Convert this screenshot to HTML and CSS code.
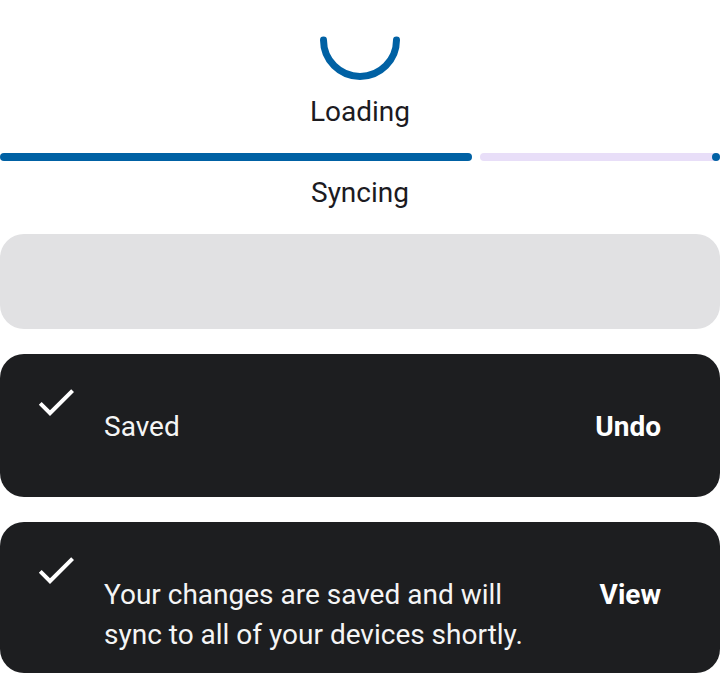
FILE: index.html
```html
<!DOCTYPE html>
<html lang="en">
<head>
    <meta charset="UTF-8">
    <meta name="viewport" content="width=device-width, initial-scale=1.0">
    <title>Status Components</title>
    <link rel="stylesheet" href="styles.css">
</head>
<body>
    <div class="status">
        <svg class="spinner" width="80" height="80" viewBox="0 0 80 80">
            <path d="M3.5 40 A36.5 36.5 0 0 0 76.5 40" fill="none" stroke="currentColor" stroke-width="7" stroke-linecap="round"/>
        </svg>
        <div class="label">Loading</div>
    </div>

    <div class="status sync">
        <div class="progress">
            <div class="progress-fill" style="width: 472px"></div>
            <div class="progress-track"><span class="stop-dot"></span></div>
        </div>
        <div class="label">Syncing</div>
    </div>

    <div class="skeleton"></div>

    <div class="snackbar">
        <svg class="snackbar-icon" width="48" height="48" viewBox="0 0 24 24">
            <path d="M9 16.17L4.83 12l-1.42 1.41L9 19 21 7l-1.41-1.41z" fill="currentColor"/>
        </svg>
        <div class="snackbar-message">Saved</div>
        <button class="snackbar-action">Undo</button>
    </div>

    <div class="snackbar">
        <svg class="snackbar-icon" width="48" height="48" viewBox="0 0 24 24">
            <path d="M9 16.17L4.83 12l-1.42 1.41L9 19 21 7l-1.41-1.41z" fill="currentColor"/>
        </svg>
        <div class="snackbar-message">Your changes are saved and will sync to all of your devices shortly.</div>
        <button class="snackbar-action">View</button>
    </div>
</body>
</html>
```

FILE: styles.css
```css
:root {
    --primary: #0061a4;
    --track: #e8def8;
    --on-surface: #1c1b1f;
    --skeleton: #e1e1e3;
    --inverse-surface: #1d1e20;
    --inverse-text: #f5f5f5;
}

body {
    margin: 0;
    background: #fff;
    font-family: 'Roboto', 'Noto Sans', sans-serif;
    font-size: 28px;
    line-height: 40px;
    color: var(--on-surface);
    display: flex;
    flex-direction: column;
}

.status {
    display: flex;
    flex-direction: column;
    align-items: center;
    gap: 12px;
}

.status.sync {
    margin-top: 21px;
}

.spinner {
    display: block;
    color: var(--primary);
}

.label {
    text-align: center;
}

/* linear progress: filled part, gap, remaining track with stop dot */
.progress {
    display: flex;
    gap: 8px;
    width: 100%;
    height: 8px;
}

.progress-fill {
    height: 100%;
    background: var(--primary);
    border-radius: 4px;
    flex-shrink: 0;
}

.progress-track {
    flex: 1;
    display: flex;
    justify-content: flex-end;
    background: var(--track);
    border-radius: 4px;
}

.stop-dot {
    width: 8px;
    height: 8px;
    border-radius: 50%;
    background: var(--primary);
}

.skeleton {
    margin-top: 21px;
    height: 95px;
    background: var(--skeleton);
    border-radius: 24px;
}

.snackbar {
    margin-top: 25px;
    display: flex;
    align-items: flex-start;
    min-height: 143px;
    box-sizing: border-box;
    padding: 24px 43px 18px 32px;
    background: var(--inverse-surface);
    color: var(--inverse-text);
    border-radius: 24px;
}

.snackbar-icon {
    flex-shrink: 0;
    color: #fff;
}

.snackbar-message {
    flex: 1;
    margin-left: 24px;
    padding-top: 29px;
}

.snackbar-action {
    margin-left: 40px;
    padding: 29px 16px 0;
    background: none;
    border: none;
    font: inherit;
    font-weight: 700;
    color: #fff;
    cursor: pointer;
}
```
